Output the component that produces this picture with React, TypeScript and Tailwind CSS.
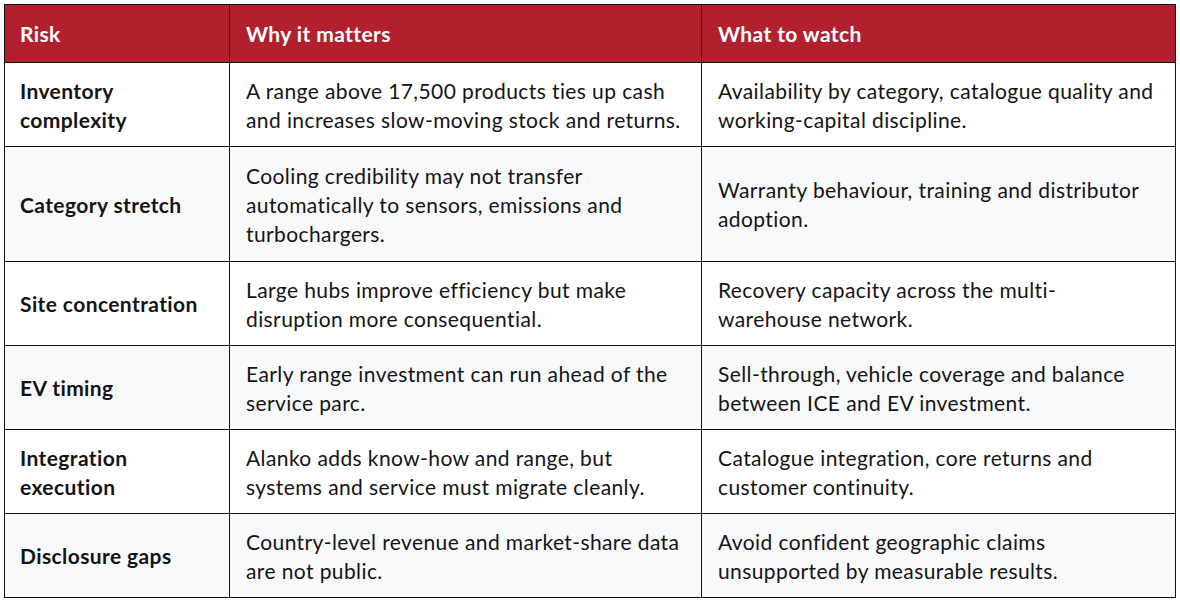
import React from 'react';

const rows = [
  {
    risk: ['Inventory', 'complexity'],
    why: ['A range above 17,500 products ties up cash', 'and increases slow-moving stock and returns.'],
    watch: ['Availability by category, catalogue quality and', 'working-capital discipline.'],
  },
  {
    risk: ['Category stretch'],
    why: ['Cooling credibility may not transfer', 'automatically to sensors, emissions and', 'turbochargers.'],
    watch: ['Warranty behaviour, training and distributor', 'adoption.'],
  },
  {
    risk: ['Site concentration'],
    why: ['Large hubs improve efficiency but make', 'disruption more consequential.'],
    watch: ['Recovery capacity across the multi-', 'warehouse network.'],
  },
  {
    risk: ['EV timing'],
    why: ['Early range investment can run ahead of the', 'service parc.'],
    watch: ['Sell-through, vehicle coverage and balance', 'between ICE and EV investment.'],
  },
  {
    risk: ['Integration', 'execution'],
    why: ['Alanko adds know-how and range, but', 'systems and service must migrate cleanly.'],
    watch: ['Catalogue integration, core returns and', 'customer continuity.'],
  },
  {
    risk: ['Disclosure gaps'],
    why: ['Country-level revenue and market-share data', 'are not public.'],
    watch: ['Avoid confident geographic claims', 'unsupported by measurable results.'],
  },
];

const Lines = ({ lines }: { lines: string[] }) => (
  <>
    {lines.map((l, i) => (
      <span key={i} className="block whitespace-nowrap">
        {l}
      </span>
    ))}
  </>
);

const App = () => {
  return (
    <div className="w-[1180px] h-[600px] bg-white pt-[4px] pl-[4px] font-['Lato',sans-serif] text-[21px] tracking-[0.4px] leading-[29px] text-[#141414]">
      <table className="w-[1171px] border-collapse table-fixed">
        <colgroup>
          <col className="w-[225px]" />
          <col className="w-[472px]" />
          <col className="w-[474px]" />
        </colgroup>
        <thead>
          <tr className="bg-[#b2202f] text-white h-[58px]">
            <th className="border border-[#111] pl-[15px] pr-[8px] text-left font-bold">Risk</th>
            <th className="border border-[#111] pl-[16px] pr-[6px] text-left font-bold">Why it matters</th>
            <th className="border border-[#111] pl-[16px] pr-[6px] text-left font-bold">What to watch</th>
          </tr>
        </thead>
        <tbody>
          {rows.map((r, i) => (
            <tr
              key={r.risk.join(' ')}
              className={`${i % 2 === 1 ? 'bg-[#f8f9fb]' : 'bg-white'} ${r.why.length > 2 ? 'h-[115px]' : 'h-[84px]'}`}
            >
              <td className="border border-[#111] pl-[15px] pr-[8px] py-[12px] font-bold align-middle">
                <Lines lines={r.risk} />
              </td>
              <td className="border border-[#111] pl-[16px] pr-[6px] py-[12px] align-middle">
                <Lines lines={r.why} />
              </td>
              <td className="border border-[#111] pl-[16px] pr-[6px] py-[12px] align-middle">
                <Lines lines={r.watch} />
              </td>
            </tr>
          ))}
        </tbody>
      </table>
    </div>
  );
};

export default App;
